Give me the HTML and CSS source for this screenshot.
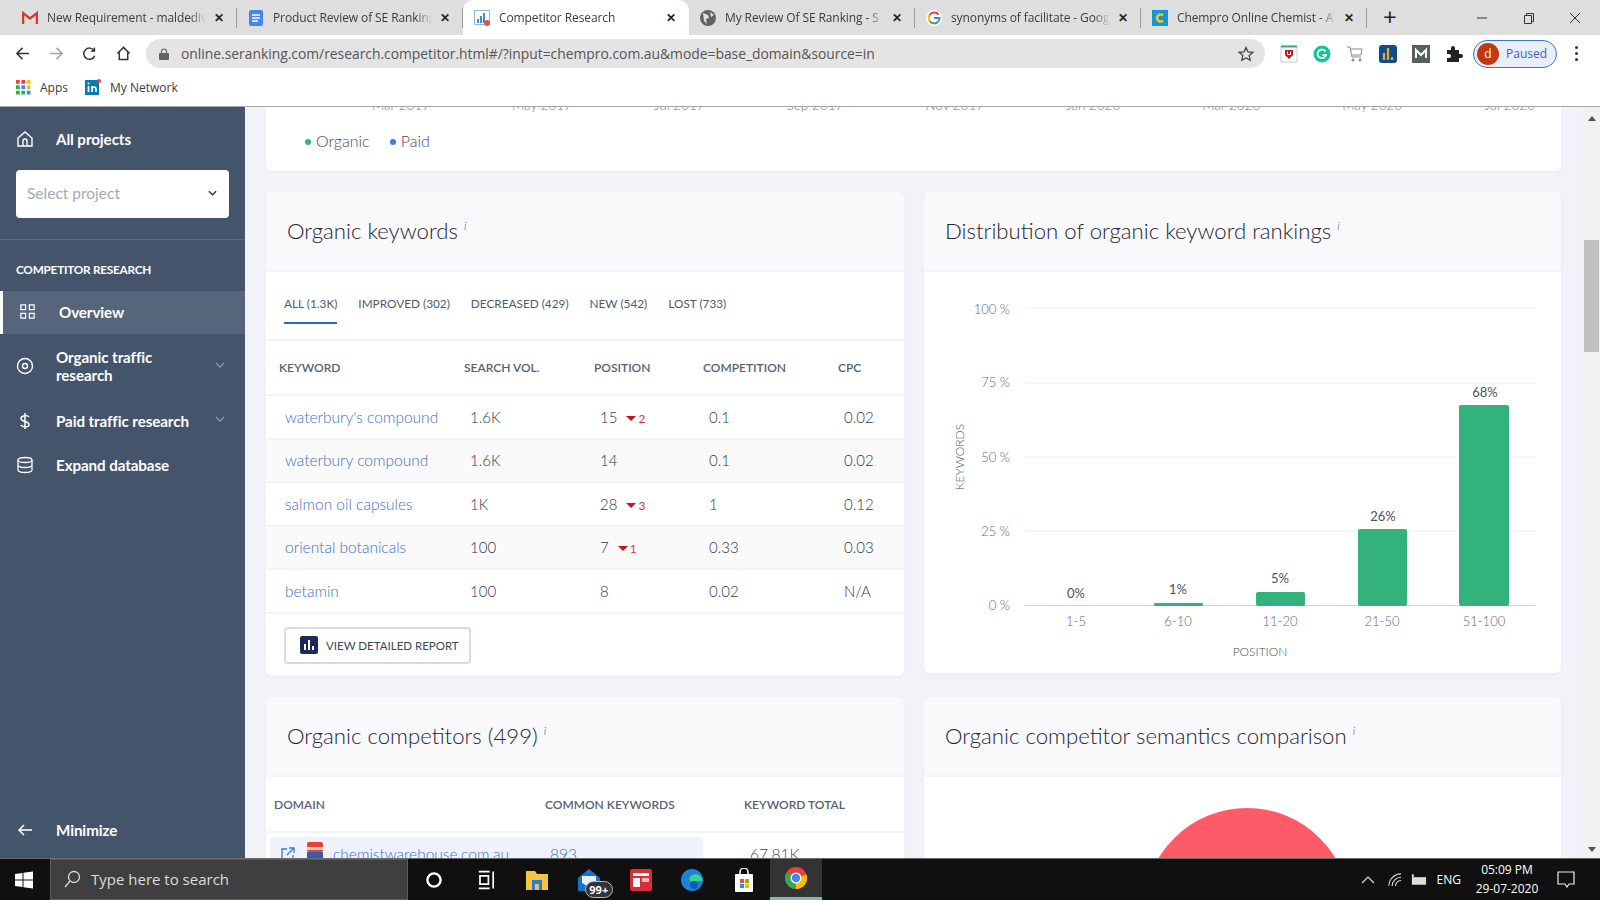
FILE: index.html
```html
<!DOCTYPE html>
<html lang="en">
<head>
    <meta charset="UTF-8">
    <title>Competitor Research</title>
    <link rel="stylesheet" href="styles.css">
</head>
<body>
    <!-- browser tabs -->
    <div class="tabstrip">
        <div class="tab">
            <svg class="favicon" viewBox="0 0 16 16"><path d="M1 14V3l7 5.500L15 3v11" fill="none" stroke="#d93a2b" stroke-width="2.400"/></svg>
            <span class="tab-title">New Requirement - maldediv</span>
            <span class="tab-close">✕</span>
        </div>
        <div class="tab">
            <svg class="favicon" viewBox="0 0 16 16"><rect x="1" y="0" width="14" height="16" rx="2" fill="#4285f4"/><path d="M4 5h8M4 8h8M4 11h6" stroke="#fff" stroke-width="1.300"/></svg>
            <span class="tab-title">Product Review of SE Ranking</span>
            <span class="tab-close">✕</span>
        </div>
        <div class="tab tab-active">
            <svg class="favicon" viewBox="0 0 16 16"><rect x="0.500" y="0.500" width="15" height="14" fill="none" stroke="#8fb7e8"/><path d="M4 13V9M7 13V6M10 13V3" stroke="#3d8fd9" stroke-width="2"/><circle cx="13" cy="13" r="3" fill="#ef4a5a"/></svg>
            <span class="tab-title">Competitor Research</span>
            <span class="tab-close">✕</span>
        </div>
        <div class="tab">
            <svg class="favicon" viewBox="0 0 16 16"><circle cx="8" cy="8" r="8" fill="#5f6368"/><path d="M3 3l5 2 1 3-3 1 1 5-3-3zM10 2l4 3-3 2z" fill="#dedede"/></svg>
            <span class="tab-title">My Review Of SE Ranking - S</span>
            <span class="tab-close">✕</span>
        </div>
        <div class="tab">
            <svg class="favicon" viewBox="0 0 16 16"><circle cx="8" cy="8" r="8" fill="#fff"/><path d="M12.500 4.500A5.500 5.500 0 0 0 3.600 5" fill="none" stroke="#ea4335" stroke-width="2"/><path d="M3.600 5a5.500 5.500 0 0 0 0 6" fill="none" stroke="#fbbc05" stroke-width="2"/><path d="M3.600 11a5.500 5.500 0 0 0 8.400 .8" fill="none" stroke="#34a853" stroke-width="2"/><path d="M12 11.800A5.500 5.500 0 0 0 13.500 8H8" fill="none" stroke="#4285f4" stroke-width="2"/></svg>
            <span class="tab-title">synonyms of facilitate - Goog</span>
            <span class="tab-close">✕</span>
        </div>
        <div class="tab">
            <svg class="favicon" viewBox="0 0 16 16"><rect width="16" height="16" fill="#1296d4"/><path d="M11 5.500A3.500 3.500 0 1 0 11 10.500" fill="none" stroke="#f5c518" stroke-width="2.600"/></svg>
            <span class="tab-title">Chempro Online Chemist - A</span>
            <span class="tab-close">✕</span>
        </div>
        <span class="newtab">+</span>
        <div class="winbuttons">
            <svg viewBox="0 0 12 12"><path d="M1 6h10" stroke="#333"/></svg>
            <svg viewBox="0 0 12 12"><path d="M1.500 3.500h7v8h-7zM3.500 3.500v-2h7v8h-2" fill="none" stroke="#333"/></svg>
            <svg viewBox="0 0 12 12"><path d="M1 1l10 10M11 1L1 11" stroke="#333"/></svg>
        </div>
    </div>

    <!-- address bar -->
    <div class="toolbar">
        <div class="navicons">
            <svg viewBox="0 0 16 16"><path d="M15 8H2M8 2L2 8l6 6" fill="none" stroke="#333" stroke-width="1.600"/></svg>
            <svg viewBox="0 0 16 16"><path d="M1 8h13M8 2l6 6-6 6" fill="none" stroke="#a3a3a3" stroke-width="1.600"/></svg>
            <svg viewBox="0 0 16 16"><path d="M13.500 10.500A6 6 0 1 1 13 5" fill="none" stroke="#333" stroke-width="1.600"/><path d="M14 1v5H9z" fill="#333"/></svg>
            <svg viewBox="0 0 16 16"><path d="M1.500 8L8 1.500 14.500 8M3.500 7v7.500h9V7" fill="none" stroke="#333" stroke-width="1.600"/></svg>
        </div>
        <div class="omnibox">
            <svg class="lock" viewBox="0 0 10 12"><path d="M2.500 5V3.500a2.500 2.500 0 0 1 5 0V5" fill="none" stroke="#5f6368" stroke-width="1.200"/><rect y="5" width="10" height="7" rx="1" fill="#5f6368"/></svg>
            <span class="url">online.seranking.com/research.competitor.html#/?input=chempro.com.au&amp;mode=base_domain&amp;source=in</span>
            <svg class="star" viewBox="0 0 16 16"><path d="M8 1.500l2 4.400 4.800.5-3.600 3.200 1 4.700L8 11.900l-4.200 2.400 1-4.700L1.200 6.400 6 5.900z" fill="none" stroke="#444" stroke-width="1.300"/></svg>
        </div>
        <div class="extensions">
            <svg viewBox="0 0 18 18"><rect x="1" y="1" width="16" height="16" fill="#fff" stroke="#ccc"/><path d="M1 1.500h16" stroke="#2bb673" stroke-width="2"/><path d="M5 5h8v5l-4 4-4-4z" fill="#c01818"/><path d="M7.500 6.500v3h3v-3" fill="none" stroke="#fff"/></svg>
            <svg viewBox="0 0 18 18"><circle cx="9" cy="9" r="8.500" fill="#15c39a"/><path d="M12.500 6.500A4.300 4.300 0 1 0 13 10H9.500" fill="none" stroke="#fff" stroke-width="1.800"/></svg>
            <svg viewBox="0 0 18 18"><path d="M1 2h3l2 10h9M5 4h11l-1 6H6" fill="none" stroke="#8a8a8a"/><circle cx="7" cy="15" r="1.500" fill="#8a8a8a"/><circle cx="14" cy="15" r="1.500" fill="#8a8a8a"/></svg>
            <svg viewBox="0 0 18 18"><rect width="18" height="18" rx="3" fill="#0f4c8a"/><path d="M5 15V8M9 15V3M13 15v-3" stroke="#f5a623" stroke-width="2.200"/></svg>
            <svg viewBox="0 0 18 18"><rect width="18" height="18" fill="#55605f"/><path d="M4 13V5l5 5 5-5v8" fill="none" stroke="#fff" stroke-width="2"/></svg>
            <svg viewBox="0 0 18 18"><path d="M2 5h4V3a2 2 0 0 1 4 0v2h4v4h2a2 2 0 0 1 0 4h-2v4H2v-4h2a2 2 0 0 0 0-4H2z" fill="#222"/></svg>
        </div>
        <div class="profile">
            <span class="avatar">d</span>
            <span class="paused">Paused</span>
        </div>
        <div class="menudots"><i></i><i></i><i></i></div>
    </div>

    <!-- bookmarks -->
    <div class="bookmarks">
        <div class="bookmark">
            <svg viewBox="0 0 14 14">
                <rect width="3.500" height="3.500" fill="#ea4335"/><rect x="5" width="3.500" height="3.500" fill="#ea4335"/><rect x="10" width="3.500" height="3.500" fill="#fbbc05"/>
                <rect y="5" width="3.500" height="3.500" fill="#34a853"/><rect x="5" y="5" width="3.500" height="3.500" fill="#4285f4"/><rect x="10" y="5" width="3.500" height="3.500" fill="#fbbc05"/>
                <rect y="10" width="3.500" height="3.500" fill="#34a853"/><rect x="5" y="10" width="3.500" height="3.500" fill="#34a853"/><rect x="10" y="10" width="3.500" height="3.500" fill="#4285f4"/>
            </svg>
            Apps
        </div>
        <div class="bookmark">
            <svg class="bookmark-in" viewBox="0 0 16 16"><rect y="1" width="14" height="15" fill="#0a78b5"/><path d="M3.500 7v6M7 13V7M7 9.500c1-2 4-2 4 .5v3" fill="none" stroke="#fff" stroke-width="1.700"/><circle cx="3.500" cy="4.500" r="1" fill="#fff"/><circle cx="14" cy="2" r="2" fill="#e8453c"/></svg>
            My Network
        </div>
    </div>

    <div class="app">
        <div class="sidebar">
            <div class="side-top">
                <div class="side-link">
                    <svg viewBox="0 0 18 18"><path d="M2 8l7-6 7 6v8H2zM7 16v-5a2 2 0 0 1 4 0v5" fill="none" stroke="#fff" stroke-width="1.400"/></svg>
                    All projects
                </div>
                <div class="select-project">
                    Select project
                    <svg viewBox="0 0 10 6"><path d="M1 1l4 4 4-4" fill="none" stroke="#333" stroke-width="1.500"/></svg>
                </div>
            </div>
            <div class="side-title">COMPETITOR RESEARCH</div>
            <div class="side-link side-active">
                <svg viewBox="0 0 18 18"><path d="M2 2h5v5H2zM11 2h5v5h-5zM2 11h5v5H2zM11 11h5v5h-5z" fill="none" stroke="#fff" stroke-width="1.300"/></svg>
                Overview
            </div>
            <div class="side-link side-tall">
                <svg viewBox="0 0 18 18"><circle cx="9" cy="9" r="7.500" fill="none" stroke="#fff" stroke-width="1.400"/><circle cx="9" cy="9" r="2.500" fill="none" stroke="#fff" stroke-width="1.400"/></svg>
                <span class="side-text">Organic traffic research</span>
                <svg class="side-chevron" viewBox="0 0 10 6"><path d="M1 1l4 4 4-4" fill="none" stroke="#8d99aa" stroke-width="1.300"/></svg>
            </div>
            <div class="side-link">
                <svg viewBox="0 0 18 18"><path d="M9 1v16M13 5c-1-2-8-2-8 1.500S13 9 13 12.500 6 15 5 13" fill="none" stroke="#fff" stroke-width="1.500"/></svg>
                <span class="side-text">Paid traffic research</span>
                <svg class="side-chevron" viewBox="0 0 10 6"><path d="M1 1l4 4 4-4" fill="none" stroke="#8d99aa" stroke-width="1.300"/></svg>
            </div>
            <div class="side-link">
                <svg viewBox="0 0 18 18"><ellipse cx="9" cy="4" rx="7" ry="2.500" fill="none" stroke="#fff" stroke-width="1.300"/><path d="M2 4v10c0 3.300 14 3.300 14 0V4M2 9c0 3.300 14 3.300 14 0" fill="none" stroke="#fff" stroke-width="1.300"/></svg>
                Expand database
            </div>
            <div class="side-link side-minimize">
                <svg viewBox="0 0 18 18"><path d="M16 9H3M8 4L3 9l5 5" fill="none" stroke="#fff" stroke-width="1.500"/></svg>
                Minimize
            </div>
        </div>

        <div class="main">
            <div class="card card-wide">
                <div class="axis-dates">
                    <span>Mar 2017</span><span>May 2017</span><span>Jul 2017</span><span>Sep 2017</span><span>Nov 2017</span><span>Jan 2020</span><span>Mar 2020</span><span>May 2020</span><span>Jul 2020</span>
                </div>
                <div class="legend">
                    <span class="legend-item"><i class="dot dot-green"></i>Organic</span>
                    <span class="legend-item"><i class="dot dot-blue"></i>Paid</span>
                </div>
            </div>

            <div class="card">
                <div class="card-head"><h2>Organic keywords <sup>i</sup></h2></div>
                <div class="tabs">
                    <span class="filter filter-active">ALL (1.3K)</span>
                    <span class="filter">IMPROVED (302)</span>
                    <span class="filter">DECREASED (429)</span>
                    <span class="filter">NEW (542)</span>
                    <span class="filter">LOST (733)</span>
                </div>
                <table class="keywords">
                    <colgroup><col class="c1"><col class="c2"><col class="c3"><col class="c4"><col class="c5"></colgroup>
                    <tr><th>KEYWORD</th><th>SEARCH VOL.</th><th>POSITION</th><th>COMPETITION</th><th>CPC</th></tr>
                    <tr><td><a>waterbury's compound</a></td><td>1.6K</td><td>15<span class="drop"><i></i>2</span></td><td>0.1</td><td>0.02</td></tr>
                    <tr><td><a>waterbury compound</a></td><td>1.6K</td><td>14</td><td>0.1</td><td>0.02</td></tr>
                    <tr><td><a>salmon oil capsules</a></td><td>1K</td><td>28<span class="drop"><i></i>3</span></td><td>1</td><td>0.12</td></tr>
                    <tr><td><a>oriental botanicals</a></td><td>100</td><td>7<span class="drop"><i></i>1</span></td><td>0.33</td><td>0.03</td></tr>
                    <tr><td><a>betamin</a></td><td>100</td><td>8</td><td>0.02</td><td>N/A</td></tr>
                </table>
                <div class="report">
                    <button class="report-btn">
                        <svg viewBox="0 0 18 18"><rect width="18" height="18" rx="2" fill="#1e2a55"/><path d="M5 14V8M9 14V4M13 14v-4" stroke="#fff" stroke-width="2"/></svg>
                        VIEW DETAILED REPORT
                    </button>
                </div>
            </div>

            <div class="card card-chart">
                <div class="card-head"><h2>Distribution of organic keyword rankings <sup>i</sup></h2></div>
                <svg class="chart" viewBox="0 0 637 401">
                    <g class="grid">
                        <path d="M101 36H612M101 111H612M101 185H612M101 259H612"/>
                    </g>
                    <path d="M101 333.500H612" stroke="#ccd3e0"/>
                    <g class="ylabels">
                        <text x="86" y="42">100 %</text>
                        <text x="86" y="115">75 %</text>
                        <text x="86" y="190">50 %</text>
                        <text x="86" y="264">25 %</text>
                        <text x="86" y="338">0 %</text>
                    </g>
                    <g class="bars">
                        <rect x="230" y="331" width="49" height="3" rx="1"/>
                        <rect x="332" y="320" width="49" height="14" rx="2"/>
                        <rect x="434" y="257" width="49" height="77" rx="2"/>
                        <rect x="535" y="133" width="50" height="201" rx="2"/>
                    </g>
                    <g class="values">
                        <text x="152" y="326">0%</text>
                        <text x="254" y="322">1%</text>
                        <text x="356" y="311">5%</text>
                        <text x="459" y="249">26%</text>
                        <text x="561" y="125">68%</text>
                    </g>
                    <g class="xlabels">
                        <text x="152" y="354">1-5</text>
                        <text x="254" y="354">6-10</text>
                        <text x="356" y="354">11-20</text>
                        <text x="458" y="354">21-50</text>
                        <text x="560" y="354">51-100</text>
                        <text x="336" y="384">POSITION</text>
                        <text transform="translate(40 185) rotate(-90)">KEYWORDS</text>
                    </g>
                </svg>
            </div>

            <div class="card">
                <div class="card-head"><h2>Organic competitors (499) <sup>i</sup></h2></div>
                <table class="competitors">
                    <colgroup><col class="d1"><col class="d2"><col class="d3"></colgroup>
                    <tr><th>DOMAIN</th><th>COMMON KEYWORDS</th><th>KEYWORD TOTAL</th></tr>
                </table>
                <div class="domain-row">
                    <div class="domain-hl">
                        <svg class="ext" viewBox="0 0 14 14"><path d="M6 2H1v11h11V8M8 1h5v5M13 1L6 8" fill="none" stroke="#3b78d8" stroke-width="1.300"/></svg>
                        <svg class="fav" viewBox="0 0 16 20"><rect width="16" height="10" rx="2" fill="#e5433a"/><rect y="5" width="16" height="3" fill="#f3c9b0"/><rect y="10" width="16" height="10" fill="#3b5aa8"/></svg>
                        <a class="domain-link">chemistwarehouse.com.au</a>
                        <a>893</a>
                    </div>
                    <span class="total">67.81K</span>
                </div>
            </div>

            <div class="card">
                <div class="card-head"><h2>Organic competitor semantics comparison <sup>i</sup></h2></div>
                <div class="venn"></div>
            </div>
        </div>

        <div class="scrollbar">
            <span class="arrow-up"></span>
            <span class="thumb"></span>
            <span class="arrow-down"></span>
        </div>
    </div>

    <!-- windows taskbar -->
    <div class="taskbar">
        <svg class="start" viewBox="0 0 18 18"><path d="M0 3l7.500-1v6.500H0zM8.500 1.800L18 .5v8H8.500zM0 9.500h7.500V16L0 15zM8.500 9.500H18v8l-9.500-1.300z" fill="#fff"/></svg>
        <div class="searchbox">
            <svg viewBox="0 0 18 18"><circle cx="11" cy="7" r="5.500" fill="none" stroke="#ddd" stroke-width="1.300"/><path d="M7 11l-5 6" stroke="#ddd" stroke-width="1.300"/></svg>
            Type here to search
        </div>
        <div class="taskicons">
            <span class="taskicon"><svg viewBox="0 0 20 20"><circle cx="10" cy="10" r="5.500" fill="none" stroke="#fff" stroke-width="2"/></svg></span>
            <span class="taskicon"><svg viewBox="0 0 20 20"><path d="M4 3h9M4 17h9M5 6.500h7v7H5zM16 3v14" fill="none" stroke="#fff" stroke-width="1.400"/></svg></span>
            <span class="taskicon"><svg viewBox="0 0 24 24"><path d="M1 3h9l2 3h11v16H1z" fill="#f5c542"/><rect x="7" y="12" width="10" height="10" fill="#2b7cd3"/><rect x="10" y="16" width="4" height="6" fill="#f5c542"/></svg></span>
            <span class="taskicon taskicon-mail"><svg viewBox="0 0 24 24"><path d="M12 1L1 10v13h22V10z" fill="#1a73c9"/><path d="M5 8h14v7l-7 4-7-4z" fill="#e8f1fa"/></svg><span class="badge">99+</span></span>
            <span class="taskicon"><svg viewBox="0 0 24 24"><rect x="1" y="1" width="22" height="22" rx="2" fill="#d92d38"/><rect x="4" y="5" width="16" height="3" fill="#fff"/><rect x="4" y="10" width="7" height="9" fill="#fff"/><rect x="13" y="10" width="7" height="4" fill="#f4b5b9"/></svg></span>
            <span class="taskicon"><svg viewBox="0 0 24 24"><circle cx="12" cy="12" r="11" fill="#1b84d8"/><path d="M23 13c-1-6-7-8-11-6-4 2-3 7 1 7 4 0 5-2 10-1z" fill="#3ed08e"/><circle cx="14" cy="17" r="4" fill="#0e5fa8"/></svg></span>
            <span class="taskicon"><svg viewBox="0 0 24 24"><path d="M8 6V4a4 4 0 0 1 8 0v2" fill="none" stroke="#fff" stroke-width="1.500"/><rect x="3" y="6" width="18" height="18" rx="1" fill="#fff"/><rect x="8" y="11" width="4" height="4" fill="#f25022"/><rect x="13" y="11" width="4" height="4" fill="#7fba00"/><rect x="8" y="16" width="4" height="4" fill="#00a4ef"/><rect x="13" y="16" width="4" height="4" fill="#ffb900"/></svg></span>
            <span class="taskicon taskicon-active"><svg viewBox="0 0 24 24"><circle cx="12" cy="12" r="11" fill="#ea4335"/><path d="M12 12L22.500 8.500A11 11 0 0 1 12 23z" fill="#fbbc05"/><path d="M12 12l0 11A11 11 0 0 1 2.500 6.500z" fill="#34a853"/><circle cx="12" cy="12" r="5.500" fill="#fff"/><circle cx="12" cy="12" r="4.200" fill="#4285f4"/></svg></span>
        </div>
        <div class="tray">
            <svg class="tray-chevron" viewBox="0 0 14 8"><path d="M1 7l6-6 6 6" fill="none" stroke="#ddd" stroke-width="1.200"/></svg>
            <svg class="tray-wifi" viewBox="0 0 16 16"><path d="M2 15A13 13 0 0 1 15 2M5.500 15A9.500 9.500 0 0 1 15 5.500M9 15a6 6 0 0 1 6-6" fill="none" stroke="#ddd" stroke-width="1.100"/></svg>
            <svg class="tray-battery" viewBox="0 0 18 14"><rect x="2" y="4" width="15" height="8" fill="#ddd"/><path d="M3 1v3" stroke="#ddd" stroke-width="2"/></svg>
            <span class="lang">ENG</span>
            <div class="clock"><span>05:09 PM</span><span>29-07-2020</span></div>
            <svg class="notify" viewBox="0 0 18 18"><path d="M1 1h16v12h-5l-2 3-2-3H1z" fill="none" stroke="#eee" stroke-width="1.200"/></svg>
        </div>
    </div>
</body>
</html>
```

FILE: styles.css
```css
/* page frame */
* {
    box-sizing: border-box;
}

body {
    margin: 0;
    height: 900px;
    display: flex;
    flex-direction: column;
    overflow: hidden;
    font-family: "Lato", "Open Sans", sans-serif;
    color: #3d4656;
}

/* browser tabs */
.tabstrip {
    height: 35px;
    display: flex;
    align-items: stretch;
    padding-left: 11px;
    background-color: #dedede;
    font-family: "Open Sans", sans-serif;
    font-size: 12px;
    color: #3c3c3c;
}

.tab {
    width: 226px;
    display: flex;
    align-items: center;
    padding: 0 11px;
    position: relative;
}

.tab::after {
    content: "";
    position: absolute;
    right: 0;
    top: 8px;
    bottom: 7px;
    width: 1px;
    background-color: #9a9a9a;
}

.tab-active {
    background-color: #fff;
    border-radius: 10px 10px 0 0;
}

.tab-active::after {
    display: none;
}

.favicon {
    width: 16px;
    height: 16px;
    flex: none;
    margin-right: 9px;
}

.tab-title {
    flex: 1;
    overflow: hidden;
    white-space: nowrap;
    letter-spacing: -0.100px;
    -webkit-mask-image: linear-gradient(to right, #000 90%, transparent);
    mask-image: linear-gradient(to right, #000 90%, transparent);
}

.tab-close {
    width: 14px;
    margin-left: 6px;
    font-size: 12px;
    font-weight: bold;
    color: #222;
    text-align: center;
}

.newtab {
    margin-left: 16px;
    font-size: 24px;
    line-height: 33px;
    color: #222;
}

.winbuttons {
    margin-left: auto;
    width: 105px;
    margin-right: 19px;
    display: flex;
    justify-content: space-between;
    align-items: center;
}

.winbuttons svg {
    width: 12px;
    height: 12px;
}

/* address bar */
.toolbar {
    height: 35px;
    display: flex;
    align-items: center;
    padding-top: 2px;
    background-color: #fff;
}

.navicons {
    width: 146px;
    display: flex;
    padding-left: 15px;
    gap: 18.500px;
}

.navicons svg {
    width: 15px;
    height: 15px;
}

.omnibox {
    width: 1119px;
    height: 29px;
    display: flex;
    align-items: center;
    padding: 0 11px 0 13px;
    border-radius: 15px;
    background-color: #e4e4e4;
    font-family: "Open Sans", sans-serif;
    font-size: 13.850px;
    color: #555;
}

.lock {
    width: 10px;
    height: 12px;
    margin-right: 12px;
}

.url {
    flex: 1;
    white-space: nowrap;
}

.star {
    width: 16px;
    height: 16px;
}

.extensions {
    display: flex;
    gap: 15px;
    margin-left: 15px;
}

.extensions svg {
    width: 18px;
    height: 18px;
}

.profile {
    width: 84px;
    height: 28px;
    margin-left: 10px;
    display: flex;
    align-items: center;
    padding-left: 3px;
    border: 1px solid #3f74c9;
    border-radius: 14px;
    background-color: #e8eefa;
    font-family: "Open Sans", sans-serif;
    font-size: 12px;
}

.avatar {
    width: 22px;
    height: 22px;
    border-radius: 50%;
    background-color: #c1390f;
    color: #fff;
    text-align: center;
    line-height: 21px;
}

.paused {
    margin-left: 7px;
    color: #3f62b5;
}

.menudots {
    margin-left: 18px;
    display: flex;
    flex-direction: column;
    gap: 3px;
}

.menudots i {
    width: 3px;
    height: 3px;
    border-radius: 50%;
    background-color: #333;
}

/* bookmarks */
.bookmarks {
    height: 37px;
    display: flex;
    align-items: center;
    gap: 17px;
    padding: 0 0 2px 16px;
    background-color: #fff;
    border-bottom: 1px solid #a8a8a8;
    font-family: "Open Sans", sans-serif;
    font-size: 12px;
    color: #3c3c3c;
}

.bookmark {
    display: flex;
    align-items: center;
    gap: 9px;
}

.bookmark svg {
    width: 15px;
    height: 15px;
}

.bookmark svg.bookmark-in {
    width: 16px;
    height: 16px;
}

/* app area */
.app {
    flex: 1;
    min-height: 0;
    display: flex;
}

/* sidebar */
.sidebar {
    width: 245px;
    flex: none;
    display: flex;
    flex-direction: column;
    background-color: #44546b;
    color: #fff;
}

.side-top {
    height: 133px;
    padding: 14px 16px 0 0;
    border-bottom: 1px solid #5e6c81;
}

.side-link {
    min-height: 44px;
    display: flex;
    align-items: center;
    padding-left: 16px;
    font-size: 15.200px;
    font-weight: 700;
    letter-spacing: -0.100px;
    position: relative;
}

.side-top .side-link {
    min-height: 36px;
}

.side-link > svg:first-child {
    width: 18px;
    height: 18px;
    flex: none;
    margin-right: 22px;
}

.select-project {
    height: 48px;
    margin: 13px 0 0 16px;
    display: flex;
    align-items: center;
    justify-content: space-between;
    padding: 0 12px 2px 11px;
    border-radius: 4px;
    background-color: #fff;
    font-size: 15.500px;
    color: #a5abb6;
}

.select-project svg {
    width: 9px;
    height: 6px;
}

.side-title {
    margin: 23px 0 14px 16px;
    font-size: 11.800px;
    font-weight: 700;
    line-height: 14px;
    letter-spacing: -0.250px;
}

.side-active {
    height: 43px;
    min-height: 43px;
    padding-bottom: 2px;
    border-left: 3px solid #fff;
    background-color: #566579;
}

.side-active > svg:first-child {
    width: 17px;
    height: 17px;
    margin-right: 23px;
}

.side-tall {
    min-height: 65px;
    padding-bottom: 2px;
    line-height: 18px;
}

.side-text {
    width: 140px;
}

.side-chevron {
    position: absolute;
    left: 215px;
    top: calc(50% - 5px);
    width: 10px;
    height: 6px;
}

.side-minimize {
    margin-top: auto;
    margin-bottom: 6px;
}

/* main column */
.main {
    flex: 1;
    min-width: 0;
    display: grid;
    grid-template-columns: 638px 637px;
    grid-template-rows: 64px 484px 1fr;
    column-gap: 20px;
    row-gap: 21px;
    padding-left: 21px;
    overflow: hidden;
    background-color: #f1f3f8;
    align-items: start;
}

.card {
    background-color: #fff;
    border-radius: 6px;
    overflow: hidden;
    box-shadow: 0 1px 3px rgba(60, 70, 100, 0.05);
}

.card-wide {
    grid-column: 1 / 3;
    height: 64px;
    border-radius: 0 0 6px 6px;
}

.card-chart {
    height: 481px;
}

/* only the feet of the date labels show above the fold */
.axis-dates {
    height: 6px;
    padding: 0 26px 0 106px;
    display: flex;
    justify-content: space-between;
    align-items: flex-end;
    overflow: hidden;
    font-size: 13.500px;
    font-weight: 300;
    line-height: 16px;
    color: #6f7a8b;
}

.legend {
    display: flex;
    gap: 20px;
    padding: 18px 0 0 39px;
    font-size: 16px;
    font-weight: 300;
    line-height: 19px;
    color: #414b5b;
}

.legend-item {
    display: flex;
    align-items: center;
    gap: 5px;
}

.dot {
    width: 6px;
    height: 6px;
    margin-top: 2px;
    border-radius: 50%;
}

.dot-green {
    background-color: #33b280;
}

.dot-blue {
    background-color: #3b7cec;
}

.card-head {
    height: 80px;
    padding: 25px 0 0 21px;
    background-color: #f9f9fc;
    border-bottom: 2px solid #f3f4f8;
}

.card-head h2 {
    margin: 0;
    font-size: 22.200px;
    font-weight: 300;
    line-height: 28px;
    color: #1f2633;
}

.card-head sup {
    font-size: 12px;
    font-style: italic;
    line-height: 0;
    vertical-align: 9px;
    color: #555;
}

/* keyword filter tabs */
.tabs {
    height: 69px;
    display: flex;
    gap: 21px;
    padding: 24px 0 0 18px;
    border-bottom: 2px solid #f3f4f8;
}

.filter {
    height: 28px;
    font-size: 11.800px;
    line-height: 16px;
    color: #4f5a6b;
}

.filter-active {
    border-bottom: 2px solid #1a6dd6;
}

/* tables */
table {
    width: 100%;
    table-layout: fixed;
    border-collapse: collapse;
}

.c1 { width: 185px; }
.c2 { width: 130px; }
.c3 { width: 109px; }
.c4 { width: 135px; }
.c5 { width: 79px; }

.d1 { width: 271px; }
.d2 { width: 199px; }
.d3 { width: 168px; }

th {
    height: 54px;
    padding: 0 0 0 13px;
    border-bottom: 2px solid #f3f4f8;
    font-size: 12px;
    font-weight: 600;
    text-align: left;
    color: #566172;
}

.competitors th {
    height: 55px;
    padding-left: 8px;
}

.keywords td {
    height: 43.500px;
    padding: 0 0 0 19px;
    border-bottom: 2px solid #f3f4f8;
    font-size: 15px;
    font-weight: 300;
    color: #2f3746;
}

.keywords td:first-child {
    font-size: 15.500px;
}

.keywords tr:nth-child(odd) td {
    background-color: #fafafb;
}

.keywords tr:first-child td {
    background-color: #fff;
}

.keywords a,
.domain-row a {
    color: #3f70c6;
}

.drop {
    margin-left: 9px;
    font-size: 12px;
    font-weight: 400;
    color: #e0343f;
}

.drop i {
    display: inline-block;
    margin-right: 2px;
    vertical-align: 2px;
    border-left: 5px solid transparent;
    border-right: 5px solid transparent;
    border-top: 5px solid #cc0f1e;
}

.report {
    padding: 13px 0 12px 18px;
}

.report-btn {
    width: 187px;
    height: 37px;
    display: flex;
    align-items: center;
    gap: 8px;
    padding: 0 0 0 14px;
    border: 2px solid #d8dbe5;
    border-radius: 4px;
    background-color: #fff;
    font-family: inherit;
    font-size: 11.500px;
    color: #3d4656;
}

.report-btn svg {
    width: 18px;
    height: 18px;
}

.domain-row {
    display: flex;
    align-items: flex-start;
    padding: 4px 0 0 4px;
    font-size: 15.500px;
    font-weight: 300;
}

.domain-hl {
    width: 433px;
    height: 40px;
    display: flex;
    align-items: flex-start;
    padding: 8px 0 0 11px;
    border-radius: 4px;
    background-color: #eff2fd;
}

.ext {
    width: 14px;
    height: 14px;
    margin: 2px 12px 0 0;
}

.fav {
    width: 16px;
    height: 20px;
    margin: -3px 10px 0 0;
}

.domain-link {
    width: 217px;
    flex: none;
    white-space: nowrap;
}

.total {
    margin: 8px 0 0 47px;
}

.venn {
    width: 206px;
    height: 206px;
    margin: 31px 0 0 220px;
    border-radius: 50%;
    background-color: #ff5a68;
}

/* chart */
.chart {
    display: block;
    width: 637px;
    height: 401px;
    font-family: "Lato", sans-serif;
    font-size: 13px;
    font-weight: 300;
}

.grid path {
    stroke: #eceef2;
    fill: none;
}

.ylabels text {
    fill: #5f6a7a;
    text-anchor: end;
}

.xlabels text {
    fill: #5f6a7a;
    text-anchor: middle;
}

.xlabels text:nth-last-child(-n+2) {
    font-size: 12px;
    fill: #434e5e;
}

.bars rect {
    fill: #34b27e;
}

.values text {
    font-weight: 400;
    fill: #4a5263;
    text-anchor: middle;
}

/* scrollbar */
.scrollbar {
    width: 17px;
    flex: none;
    position: relative;
    background-color: #f1f1f1;
}

.thumb {
    position: absolute;
    left: 1px;
    right: 1px;
    top: 133px;
    height: 112px;
    background-color: #c1c1c1;
}

.arrow-up,
.arrow-down {
    position: absolute;
    left: 5px;
    border-left: 4px solid transparent;
    border-right: 4px solid transparent;
}

.arrow-up {
    top: 9px;
    border-bottom: 5px solid #505050;
}

.arrow-down {
    bottom: 6px;
    border-top: 5px solid #505050;
}

/* taskbar */
.taskbar {
    height: 42px;
    display: flex;
    align-items: center;
    background-color: #101010;
    border-top: 1px solid #6a6a6a;
    color: #fff;
    font-family: "Open Sans", sans-serif;
    font-size: 12px;
}

.start {
    width: 18px;
    height: 18px;
    margin: 0 17px 0 15px;
}

.searchbox {
    width: 358px;
    height: 41px;
    display: flex;
    align-items: center;
    gap: 10px;
    padding: 0 0 2px 12px;
    background-color: #3f3f3f;
    border: 1px solid #5c5c5c;
    font-size: 15px;
    color: #ddd;
}

.searchbox svg {
    width: 18px;
    height: 18px;
}

.taskicons {
    display: flex;
}

.taskicon {
    width: 51.700px;
    height: 41px;
    display: flex;
    align-items: center;
    justify-content: center;
    position: relative;
}

.taskicon svg {
    width: 24px;
    height: 24px;
}

.badge {
    position: absolute;
    right: 2px;
    bottom: 2px;
    width: 28px;
    height: 17px;
    border-radius: 9px;
    border: 1px solid #bbb;
    background-color: #333;
    font-size: 11px;
    font-weight: bold;
    line-height: 15px;
    text-align: center;
}

.taskicon-active {
    background-color: #333;
    border-bottom: 3px solid #61c6bd;
}

.tray {
    margin-left: auto;
    display: flex;
    align-items: center;
    padding-right: 25px;
}

.tray-chevron {
    width: 14px;
    height: 8px;
    margin-right: 12px;
}

.tray-wifi {
    width: 15px;
    height: 15px;
    margin-right: 8px;
}

.tray-battery {
    width: 17px;
    height: 14px;
    margin-right: 10px;
}

.clock {
    width: 72px;
    margin: 0 14px 0 10px;
    display: flex;
    flex-direction: column;
    align-items: center;
    gap: 3px;
    line-height: 16px;
}

.notify {
    width: 18px;
    height: 18px;
}
```
